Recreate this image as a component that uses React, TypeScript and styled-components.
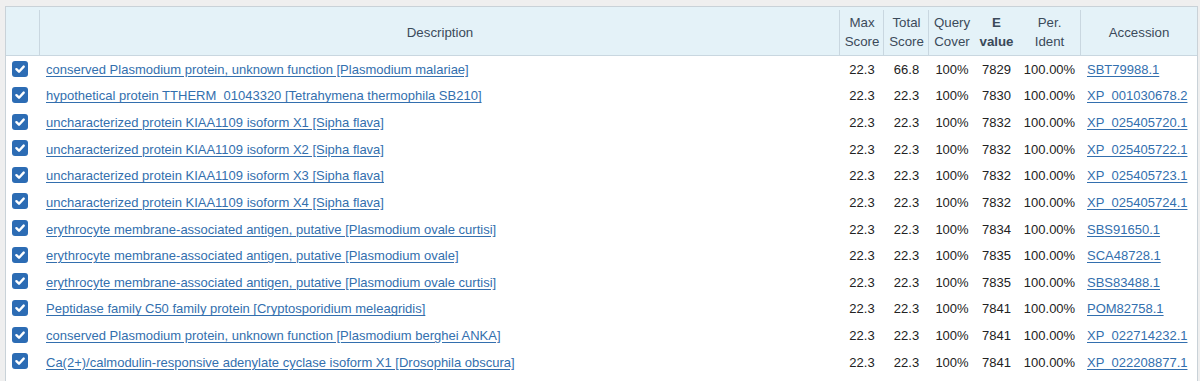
import styled, { createGlobalStyle } from 'styled-components';

interface Hit {
  desc: string;
  max: string;
  total: string;
  cover: string;
  evalue: string;
  ident: string;
  acc: string;
}

const hits: Hit[] = [
  { desc: 'conserved Plasmodium protein, unknown function [Plasmodium malariae]', max: '22.3', total: '66.8', cover: '100%', evalue: '7829', ident: '100.00%', acc: 'SBT79988.1' },
  { desc: 'hypothetical protein TTHERM_01043320 [Tetrahymena thermophila SB210]', max: '22.3', total: '22.3', cover: '100%', evalue: '7830', ident: '100.00%', acc: 'XP_001030678.2' },
  { desc: 'uncharacterized protein KIAA1109 isoform X1 [Sipha flava]', max: '22.3', total: '22.3', cover: '100%', evalue: '7832', ident: '100.00%', acc: 'XP_025405720.1' },
  { desc: 'uncharacterized protein KIAA1109 isoform X2 [Sipha flava]', max: '22.3', total: '22.3', cover: '100%', evalue: '7832', ident: '100.00%', acc: 'XP_025405722.1' },
  { desc: 'uncharacterized protein KIAA1109 isoform X3 [Sipha flava]', max: '22.3', total: '22.3', cover: '100%', evalue: '7832', ident: '100.00%', acc: 'XP_025405723.1' },
  { desc: 'uncharacterized protein KIAA1109 isoform X4 [Sipha flava]', max: '22.3', total: '22.3', cover: '100%', evalue: '7832', ident: '100.00%', acc: 'XP_025405724.1' },
  { desc: 'erythrocyte membrane-associated antigen, putative [Plasmodium ovale curtisi]', max: '22.3', total: '22.3', cover: '100%', evalue: '7834', ident: '100.00%', acc: 'SBS91650.1' },
  { desc: 'erythrocyte membrane-associated antigen, putative [Plasmodium ovale]', max: '22.3', total: '22.3', cover: '100%', evalue: '7835', ident: '100.00%', acc: 'SCA48728.1' },
  { desc: 'erythrocyte membrane-associated antigen, putative [Plasmodium ovale curtisi]', max: '22.3', total: '22.3', cover: '100%', evalue: '7835', ident: '100.00%', acc: 'SBS83488.1' },
  { desc: 'Peptidase family C50 family protein [Cryptosporidium meleagridis]', max: '22.3', total: '22.3', cover: '100%', evalue: '7841', ident: '100.00%', acc: 'POM82758.1' },
  { desc: 'conserved Plasmodium protein, unknown function [Plasmodium berghei ANKA]', max: '22.3', total: '22.3', cover: '100%', evalue: '7841', ident: '100.00%', acc: 'XP_022714232.1' },
  { desc: 'Ca(2+)/calmodulin-responsive adenylate cyclase isoform X1 [Drosophila obscura]', max: '22.3', total: '22.3', cover: '100%', evalue: '7841', ident: '100.00%', acc: 'XP_022208877.1' },
];

const colWidths = [34, 800, 44, 45, 46, 43, 63, 116];

const GlobalStyle = createGlobalStyle`
  html, body {
    margin: 0;
    padding: 0;
    background: #efefef;
    font-family: 'Liberation Sans', Arial, sans-serif;
  }
`;

const Page = styled.div`
  display: flex;
  padding: 6px 3px 0 5px;
  height: 381px;
  overflow: hidden;
  box-sizing: border-box;
`;

// the results panel runs on past the bottom of the window
const Panel = styled.div`
  flex: 1;
  background: #fff;
  border: 1px solid #c9d2d8;
  border-bottom: none;
`;

const Table = styled.table`
  width: 100%;
  table-layout: fixed;
  border-collapse: collapse;
  font-size: 13px;
`;

const HeadRow = styled.tr`
  height: 48px;
  background: #e4f2f8;
  border-bottom: 1px solid #c9d7e0;
`;

const Th = styled.th<{ $bold?: boolean }>`
  position: relative;
  padding: 3px 2px 0;
  font-weight: ${(p) => (p.$bold ? 'bold' : 'normal')};
  font-size: 13.3px;
  color: #3b4a5a;
  line-height: 19.4px;
  text-align: center;
  vertical-align: middle;

  & + &::before {
    content: '';
    position: absolute;
    left: -1px;
    top: 3px;
    bottom: 0;
    width: 1px;
    background: #c9d7e0;
  }
`;

const Row = styled.tr`
  height: 26.64px;
`;

const Td = styled.td<{ $align?: 'left' | 'center' }>`
  padding: 3px 0 0 ${(p) => (p.$align === 'center' ? '0' : '6px')};
  text-align: ${(p) => p.$align ?? 'left'};
  color: #222;
  white-space: nowrap;
  overflow: hidden;
  vertical-align: middle;
  line-height: 16px;
`;

const BoxCell = styled.td`
  padding: 0 0 0 6px;
  vertical-align: middle;
`;

const Link = styled.a`
  color: #336fae;
  text-decoration: underline;
  text-underline-offset: 2px;
`;

const Box = styled.span`
  display: flex;
  align-items: center;
  justify-content: center;
  width: 16px;
  height: 16px;
  border-radius: 3px;
  background: #2c6cb4;
`;

const Check = () => (
  <Box>
    <svg width="12" height="12" viewBox="0 0 12 12">
      <polyline points="2.4 6.2 5 8.7 9.7 3.6" fill="none" stroke="#fff" strokeWidth="2.4" strokeLinecap="round" strokeLinejoin="round" />
    </svg>
  </Box>
);

const App = () => (
  <Page>
    <GlobalStyle />
    <Panel>
      <Table>
        <colgroup>
          {colWidths.map((w, i) => (
            <col key={i} style={{ width: w }} />
          ))}
        </colgroup>
        <thead>
          <HeadRow>
            <Th />
            <Th>Description</Th>
            <Th>Max<br />Score</Th>
            <Th>Total<br />Score</Th>
            <Th>Query<br />Cover</Th>
            <Th $bold>E<br />value</Th>
            <Th>Per.<br />Ident</Th>
            <Th>Accession</Th>
          </HeadRow>
        </thead>
        <tbody>
          {hits.map((h, i) => (
            <Row key={i}>
              <BoxCell><Check /></BoxCell>
              <Td><Link href="#">{h.desc}</Link></Td>
              <Td $align="center">{h.max}</Td>
              <Td $align="center">{h.total}</Td>
              <Td $align="center">{h.cover}</Td>
              <Td $align="center">{h.evalue}</Td>
              <Td $align="center">{h.ident}</Td>
              <Td><Link href="#">{h.acc}</Link></Td>
            </Row>
          ))}
        </tbody>
      </Table>
    </Panel>
  </Page>
);

export default App;
